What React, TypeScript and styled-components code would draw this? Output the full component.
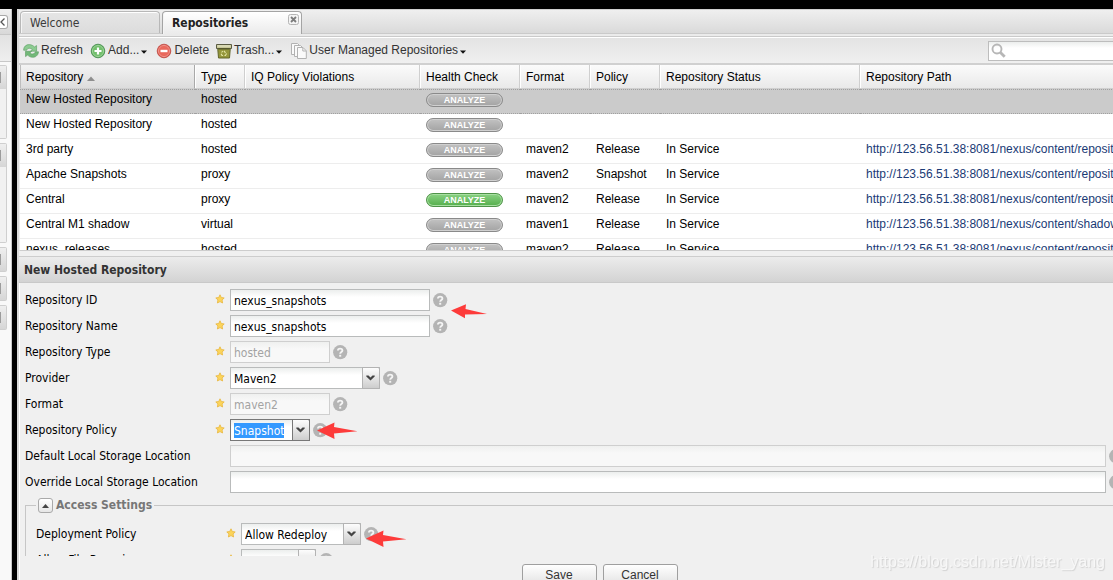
import React from 'react';
import styled, { createGlobalStyle, css } from 'styled-components';

const arial = '"Liberation Sans", Arial, sans-serif';
const tahoma = 'Tahoma, "DejaVu Sans Condensed", "Noto Sans", sans-serif';

const GlobalStyle = createGlobalStyle`
  * { box-sizing: border-box; }
  body { margin: 0; background: #000; color: #000; font: 12px/15px ${arial}; }
  button, input, select { font: inherit; color: inherit; margin: 0; }
`;

const Page = styled.div`
  display: flex;
  gap: 5px;
  height: 100vh;
  padding-top: 9px;
  overflow: hidden;
  background: #000;
`;

/* Left navigation, mostly scrolled out of view */
const Sidebar = styled.aside`
  flex: 0 0 12px;
  background: #f9f9f9;
  border-right: 1px solid #c8c8c8;
  overflow: hidden;
`;
const SidebarHead = styled.div`
  height: 26px;
  padding-top: 6px;
  background: linear-gradient(#f0f0f0, #d8d8d8);
  border-bottom: 1px solid #c8c8c8;
`;
const CollapseButton = styled.button`
  display: flex;
  align-items: center;
  width: 8px;
  height: 14px;
  padding: 0;
  background: #fff;
  border: 1px solid #a8a8a8;
  border-left: 0;
  border-radius: 0 3px 3px 0;
`;
const SidebarBar = styled.div`
  height: 27px;
  margin-bottom: 3px;
  background: linear-gradient(#e2e2e2, #efefef);
  border-bottom: 1px solid #c8c8c8;
`;
const NavGroup = styled.section<{ $body: number }>`
  width: 7px;
  margin-bottom: 4px;
  padding-bottom: ${p => p.$body}px;
  background: #f1f1f1;
  border: 1px solid #cfcfcf;
  border-left: 0;
  border-radius: 0 2px 2px 0;
`;
const NavHead = styled.div`
  display: flex;
  align-items: center;
  height: 23px;
  background: linear-gradient(#efefef, #d6d6d6);
  &::before { content: ''; width: 1px; height: 11px; background: #9c9c9c; }
`;

const Main = styled.main`
  flex: 1;
  min-width: 0;
  display: flex;
  flex-direction: column;
  background: #f0f0f0;
  border-left: 2px solid #d9d9d9;
  overflow: hidden;
`;

const TabStrip = styled.div`
  flex: none;
  height: 28px;
  background: #ebebeb;
  border-bottom: 1px solid #cacaca;
`;
const Tabs = styled.nav`
  display: flex;
  align-items: flex-end;
  gap: 2px;
  height: 25px;
  padding: 2px 0 0 1px;
  background: linear-gradient(#efefef, #dadada);
  border-top: 1px solid #d0d0d0;
  border-bottom: 1px solid #cacaca;
`;
const Tab = styled.button<{ $active?: boolean }>`
  position: relative;
  display: flex;
  align-items: center;
  width: 140px;
  height: 22px;
  padding: 2px 9px 0;
  font-family: ${tahoma};
  color: #3b3b3b;
  background: linear-gradient(#e6e6e6, #dcdcdc);
  border: 1px solid #b8b8b8;
  border-bottom: 0;
  border-radius: 4px 4px 0 0;
  box-shadow: inset 0 1px #fff, inset 1px 0 #f4f4f4;
  ${p => p.$active && css`
    font-weight: bold;
    color: #222;
    height: 23px;
    margin-bottom: -1px;
    padding-top: 1px;
    background: linear-gradient(#fff, #ebebeb);
    border-color: #a4a4a4;
  `}
`;
const TabClose = styled.svg`
  position: absolute;
  top: 2px;
  right: 2px;
`;

const Toolbar = styled.div`
  flex: none;
  display: flex;
  align-items: center;
  height: 28px;
  padding-left: 4px;
  background: linear-gradient(#e3e3e3, #f0f0f0);
  border-top: 1px solid #fff;
  border-bottom: 2px solid #d0d0d0;
`;
const ToolButton = styled.button`
  display: flex;
  align-items: center;
  gap: 2px;
  height: 22px;
  margin-right: 7px;
  padding: 0;
  color: #333;
  white-space: nowrap;
  background: none;
  border: 0;
`;
const CaretSvg = styled.svg`
  margin: 2px 2px 0 0;
`;
const SearchBox = styled.label`
  display: flex;
  align-items: center;
  width: 126px;
  height: 20px;
  margin: 0 -1px 0 auto;
  padding-left: 2px;
  background: linear-gradient(#eceeed, #fff 6px);
  border: 1px solid #bdbdbd;
`;
const SearchInput = styled.input`
  flex: 1;
  min-width: 0;
  background: none;
  border: 0;
  outline: 0;
`;

const GridView = styled.div`
  flex: 0 0 186px;
  background: #fff;
  border-bottom: 1px solid #cdcdcd;
  border-left: 1px solid #efefef;
  overflow: hidden;
`;
const Table = styled.table`
  width: 100%;
  min-width: 1240px;
  table-layout: fixed;
  border-collapse: separate;
  border-spacing: 0;
`;
const Th = styled.th<{ $sorted?: boolean }>`
  height: 24px;
  padding: 2px 0 0 6px;
  font-weight: normal;
  text-align: left;
  white-space: nowrap;
  background: linear-gradient(#fbfbfb, #e9e9e9);
  border-right: 1px solid #cfcfcf;
  border-bottom: 1px solid #cfcfcf;
  box-shadow: inset 1px 0 #fff;
  ${p => p.$sorted && css`
    background: linear-gradient(#f3f3f3, #dcdcdc);
    border-right-color: #a9a9a9;
    box-shadow: inset 1px 0 #bdbdbd;
  `}
`;
const Td = styled.td`
  height: 25px;
  padding: 2px 0 2px 6px;
  vertical-align: top;
  white-space: nowrap;
  border-top: 1px solid #fff;
  border-bottom: 1px solid #ededed;
`;
const Row = styled.tr<{ $selected?: boolean }>`
  ${p => p.$selected && css`
    ${Td} {
      background: #cbcbcb;
      border-top: 1px dotted #a0a0a0;
      border-bottom: 1px dotted #a0a0a0;
    }
  `}
`;
const RepoLink = styled.a`
  color: #1a3a75;
  text-decoration: none;
`;
const Analyze = styled.button<{ $on?: boolean }>`
  display: block;
  width: 77px;
  height: 14px;
  margin-top: 1px;
  padding: 0;
  font: bold 9px/12px ${arial};
  color: #fff;
  background: ${p => (p.$on ? 'linear-gradient(#8ad283, #55ae4c)' : 'linear-gradient(#c2c2c2, #a3a3a3)')};
  border: 1px solid ${p => (p.$on ? '#4f9348' : '#8a8a8a')};
  border-radius: 7px;
  box-shadow: inset 0 0 0 1px ${p => (p.$on ? '#a8dfa2' : '#d0d0d0')};
`;

const DetailHead = styled.h2`
  flex: none;
  height: 27px;
  margin: 5px 0 0;
  padding: 1px 0 0 5px;
  font: bold 12px/25px ${tahoma};
  color: #333;
  background: linear-gradient(#ececec, #d3d3d3);
  border-top: 1px solid #cdcdcd;
  border-bottom: 1px solid #c9c9c9;
`;
const FormBody = styled.form`
  flex: 1;
  min-height: 0;
  padding: 6px 0 0 5px;
  font-family: ${tahoma};
  border-left: 1px solid #fff;
  overflow: hidden;
`;
const FormRow = styled.div<{ $wide?: boolean }>`
  display: grid;
  grid-template-columns: 190px 15px 1fr;
  align-items: center;
  height: 22px;
  margin-bottom: 4px;
  margin-right: ${p => (p.$wide ? '-11px' : '0')};
`;
const Control = styled.div`
  display: flex;
  align-items: center;
  gap: 3px;
`;
const TextInput = styled.input<{ $width?: number }>`
  ${p => (p.$width ? css`width: ${p.$width}px;` : css`flex: 1;`)}
  min-width: 0;
  height: 22px;
  padding: 2px 3px 0;
  background: linear-gradient(#eceeed, #fff 7px);
  border: 1px solid #b9bbbb;
  border-radius: 0;
  outline: 0;
  &:disabled {
    color: #a3a3a3;
    background: linear-gradient(#eff0ef, #f8f8f8 7px);
    border-color: #cfcfcf;
  }
`;
const Combo = styled.span<{ $width: number }>`
  position: relative;
  display: flex;
  width: ${p => p.$width}px;
`;
const Select = styled.select<{ $highlight?: boolean }>`
  appearance: none;
  width: 100%;
  height: 22px;
  padding: 2px 18px 0 3px;
  background: linear-gradient(#eceeed, #fff 7px);
  border: 1px solid #b9bbbb;
  border-radius: 0;
  outline: 0;
  ${p => p.$highlight && css`
    color: #fff;
    background: linear-gradient(#3399ff, #3399ff) 3px 3px / 50px 15px no-repeat, linear-gradient(#eceeed, #fff 7px);
    border-color: #777;
  `}
`;
const Trigger = styled.span<{ $dark?: boolean }>`
  position: absolute;
  top: 0;
  right: 0;
  display: flex;
  align-items: center;
  justify-content: center;
  width: 18px;
  height: 22px;
  padding-right: 1px;
  background: linear-gradient(#fdfdfd, #cdcdcd);
  border: 1px solid ${p => (p.$dark ? '#777' : '#b3b3b3')};
  border-radius: 0 2px 0 0;
  pointer-events: none;
`;
const HelpWrap = styled.span`
  position: relative;
  display: flex;
  flex: none;
`;
const ArrowSvg = styled.svg<{ $left: number; $top: number }>`
  position: absolute;
  left: ${p => p.$left}px;
  top: ${p => p.$top}px;
`;

const Fieldset = styled.fieldset`
  min-width: 0;
  height: 120px;
  margin: 5px -10px 0 0;
  padding: 10px;
  border: 1px solid #c6c6c6;
`;
const Legend = styled.legend`
  display: flex;
  align-items: center;
  gap: 3px;
  height: 15px;
  padding: 0 2px;
  font-weight: bold;
  color: #777;
`;
const Toggle = styled.button`
  display: flex;
  align-items: center;
  justify-content: center;
  width: 15px;
  height: 15px;
  padding: 0;
  background: linear-gradient(#fff, #e6e6e6);
  border: 1px solid #a9a9a9;
  border-radius: 3px;
`;

const Footer = styled.footer`
  flex: 0 0 24px;
  min-height: 0;
  display: flex;
  justify-content: center;
  align-items: flex-start;
  gap: 6px;
  padding: 8px 0 0 66px;
  border-left: 1px solid #fff;
  overflow: hidden;
`;
const FormButton = styled.button`
  flex: none;
  width: 75px;
  height: 22px;
  padding: 0;
  color: #333;
  background: linear-gradient(#fff, #e2e2e2);
  border: 1px solid #9f9f9f;
  border-radius: 3px;
`;
const Watermark = styled.div`
  position: fixed;
  right: 8px;
  bottom: 8px;
  font-size: 16px;
  line-height: 20px;
  color: #f7f7f7;
  text-shadow: 1px 1px 1px #d2d2d2;
  pointer-events: none;
`;

const Caret = () => (
  <CaretSvg width="6" height="4" viewBox="0 0 6 4"><path d="M0 0.5h6L3 3.8z" fill="#111" /></CaretSvg>
);
const RefreshIcon = () => (
  <svg width="16" height="16" viewBox="0 0 16 16" stroke="#5a9a62" strokeWidth=".6" strokeLinejoin="round">
    <path d="M.6 7.200C.6 3.500 3.200 1.500 6.300 1.600 8.600 1.700 10.300 2.700 11.400 3.900L13.600 2.600V8.200H7.600L9.200 6.500C7.200 4.600 4.400 4.900 3.600 7.300z" fill="#8ccb91" />
    <path d="M15.500 8.800C15.200 12.600 12.200 14.500 9.500 14.300 7.400 14.200 5.800 13.300 4.700 12.100L2.500 13.600V8.300H8.500L6.900 10C8.900 11.800 11.600 11 12.400 8.800z" fill="#72b878" />
  </svg>
);
const RoundIcon = ({ minus }: { minus?: boolean }) => (
  <svg width="16" height="16" viewBox="0 0 16 16">
    <circle cx="8" cy="8" r="6.800" fill={minus ? '#d84c42' : '#58ab58'} stroke={minus ? '#bd4a42' : '#42894a'} strokeWidth=".8" />
    <circle cx="8" cy="8" r="5.600" fill={minus ? '#e9685c' : '#72bf6c'} stroke={minus ? '#f3aaa3' : '#b3e0ad'} strokeWidth=".7" />
    <path d={minus ? 'M4.500 6.800h7v2.400h-7z' : 'M6.900 4.500h2.200v2.400h2.400v2.200H9.100v2.400H6.900V9.100H4.500V6.900h2.400z'} fill="#fff" />
  </svg>
);
const TrashIcon = () => (
  <svg width="16" height="16" viewBox="0 0 16 16">
    <path d="M1.700 5h12.600l-.8 10H2.500z" fill="#94963b" stroke="#62662a" />
    <path d="M.5 1.500h15v4H.5z" fill="#c8c798" stroke="#5b5c43" />
    <path d="M1.500 2.500h13v1h-13z" fill="#e9e8cf" />
    <path d="M2.500 5h11v1.500h-11z" fill="#55582c" />
    <path d="M8 7.800l1.500 2M10.600 10.500l-1.200 2H8.500M7 12.500H6l-.9-1.800M5.600 9.500L6.800 8" fill="none" stroke="#e4e6a5" strokeWidth="1.100" />
  </svg>
);
const PagesIcon = () => (
  <svg width="16" height="16" viewBox="0 0 16 16" fill="#fafafa" stroke="#b2b2b2">
    <path d="M.5.500h6l3 3v8h-9z" /><path d="M3.500 2.500h6l3 3v8h-9z" />
    <path d="M6.500 4.500h5.500l3.300 3.300v7.700H6.500z" /><path d="M11.800 4.700v3.300h3.300" fill="none" />
  </svg>
);
const SearchIcon = () => (
  <svg width="16" height="16" viewBox="0 0 16 16" fill="none" stroke="#b7b7b7">
    <circle cx="6" cy="6" r="4.500" strokeWidth="1.900" /><path d="M9.200 9.200l4.500 4.500" strokeWidth="2.800" />
  </svg>
);
const Star = () => (
  <svg width="10" height="10" viewBox="0 0 10 10">
    <path d="M5 .8l1.300 2.700 2.900.4-2.100 2.100.5 3L5 7.600 2.400 9l.5-3L.8 3.900l2.900-.4z" fill="#fbd45b" stroke="#e8b63e" strokeWidth=".8" strokeLinejoin="round" />
  </svg>
);
const HelpIcon = () => (
  <svg width="15" height="15" viewBox="0 0 15 15">
    <circle cx="7.200" cy="7.200" r="7.100" fill="#b4b4b4" />
    <path d="M4.900 5.600C4.900 3 9.400 3 9.400 5.500 9.400 7 7.200 7 7.200 8.800" fill="none" stroke="#f4f4f4" strokeWidth="1.900" />
    <path d="M6.200 9.800h2v1.900h-2z" fill="#f4f4f4" />
  </svg>
);

type ArrowPos = { left: number; top: number; flat?: boolean };
type FieldProps = {
  id: string;
  label: string;
  value?: string;
  width?: number;
  required?: boolean;
  disabled?: boolean;
  combo?: boolean;
  focused?: boolean;
  arrow?: ArrowPos;
};

const Pointer = ({ left, top, flat }: ArrowPos) => (
  <ArrowSvg $left={left} $top={top} width="42" height="18" viewBox="0 0 42 18">
    <path
      d={flat ? 'M0 6.500L15 .3 14.500 5 36 10 14 10.500V14.200z' : 'M0 8.500L17.500.500 17 5 40.500 9.300 17 11.500 17.500 17z'}
      fill="#fd3b3a"
    />
  </ArrowSvg>
);

const Field = ({ id, label, value = '', width, required, disabled, combo, focused, arrow }: FieldProps) => (
  <FormRow $wide={!width}>
    <label htmlFor={id}>{label}</label>
    <span>{required && <Star />}</span>
    <Control>
      {combo ? (
        <Combo $width={width ?? 100}>
          <Select id={id} $highlight={focused} defaultValue={value}><option>{value}</option></Select>
          <Trigger $dark={focused}>
            <svg width="9" height="7" viewBox="0 0 9 7"><path d="M.3.500h2.200l2 2 2-2h2.200v.9L4.500 5.500.3 1.400z" fill="#444" /></svg>
          </Trigger>
        </Combo>
      ) : (
        <TextInput id={id} $width={width} defaultValue={value} disabled={disabled} />
      )}
      <HelpWrap><HelpIcon />{arrow && <Pointer {...arrow} />}</HelpWrap>
    </Control>
  </FormRow>
);

const columns: [string, number?][] = [
  ['Repository', 175], ['Type', 50], ['IQ Policy Violations', 175], ['Health Check', 100],
  ['Format', 70], ['Policy', 70], ['Repository Status', 200], ['Repository Path'],
];

const base = 'http://123.56.51.38:8081/nexus/content/';
const repositories = [
  { name: 'New Hosted Repository', type: 'hosted' },
  { name: 'New Hosted Repository', type: 'hosted' },
  { name: '3rd party', type: 'hosted', format: 'maven2', policy: 'Release', path: 'repositories/thirdparty' },
  { name: 'Apache Snapshots', type: 'proxy', format: 'maven2', policy: 'Snapshot', path: 'repositories/apache-snapshots' },
  { name: 'Central', type: 'proxy', format: 'maven2', policy: 'Release', path: 'repositories/central', on: true },
  { name: 'Central M1 shadow', type: 'virtual', format: 'maven1', policy: 'Release', path: 'shadows/central-m1' },
  { name: 'nexus_releases', type: 'hosted', format: 'maven2', policy: 'Release', path: 'repositories/nexus_releases' },
];

export default function App() {
  return (
    <Page>
      <GlobalStyle />
      <Sidebar>
        <SidebarHead>
          <CollapseButton aria-label="Collapse navigation">
            <svg width="6" height="8" viewBox="0 0 6 8"><path d="M4.500.500L1 4l3.500 3.500" fill="none" stroke="#555" strokeWidth="1.300" /></svg>
          </CollapseButton>
        </SidebarHead>
        <SidebarBar />
        {[49, 75, 0, 0, 0].map((body, i) => (
          <NavGroup key={i} $body={body}><NavHead /></NavGroup>
        ))}
      </Sidebar>
      <Main>
        <TabStrip>
          <Tabs>
            <Tab>Welcome</Tab>
            <Tab $active>
              Repositories
              <TabClose width="11" height="11" viewBox="0 0 11 11">
                <rect x=".5" y=".5" width="10" height="10" rx="2" fill="#f4f4f4" stroke="#b5b5b5" />
                <path d="M3 3l5 5M8 3L3 8" stroke="#7c7c7c" strokeWidth="1.800" />
              </TabClose>
            </Tab>
          </Tabs>
        </TabStrip>
        <Toolbar>
          <ToolButton><RefreshIcon />Refresh</ToolButton>
          <ToolButton><RoundIcon />Add...<Caret /></ToolButton>
          <ToolButton><RoundIcon minus />Delete</ToolButton>
          <ToolButton><TrashIcon />Trash...<Caret /></ToolButton>
          <ToolButton><PagesIcon />User Managed Repositories<Caret /></ToolButton>
          <SearchBox><SearchIcon /><SearchInput aria-label="Search repositories" /></SearchBox>
        </Toolbar>
        <GridView>
          <Table>
            <colgroup>{columns.map(([name, width]) => <col key={name} width={width} />)}</colgroup>
            <thead>
              <tr>
                {columns.map(([name], i) => (
                  <Th key={name} $sorted={i === 0}>
                    {name}
                    {i === 0 && <> <svg width="8" height="5" viewBox="0 0 8 5"><path d="M0 5l4-4.500L8 5z" fill="#8e8e8e" /></svg></>}
                  </Th>
                ))}
              </tr>
            </thead>
            <tbody>
              {repositories.map((r, i) => (
                <Row key={i} $selected={i === 0}>
                  <Td>{r.name}</Td>
                  <Td>{r.type}</Td>
                  <Td />
                  <Td><Analyze $on={r.on}>ANALYZE</Analyze></Td>
                  <Td>{r.format}</Td>
                  <Td>{r.policy}</Td>
                  <Td>{r.path && 'In Service'}</Td>
                  <Td>{r.path && <RepoLink href={base + r.path}>{base + r.path}</RepoLink>}</Td>
                </Row>
              ))}
            </tbody>
          </Table>
        </GridView>
        <DetailHead>New Hosted Repository</DetailHead>
        <FormBody>
          <Field id="repo-id" label="Repository ID" value="nexus_snapshots" width={200} required arrow={{ left: 18, top: 11, flat: true }} />
          <Field id="repo-name" label="Repository Name" value="nexus_snapshots" width={200} required />
          <Field id="repo-type" label="Repository Type" value="hosted" width={100} required disabled />
          <Field id="provider" label="Provider" value="Maven2" width={150} required combo />
          <Field id="format" label="Format" value="maven2" width={100} required disabled />
          <Field id="policy" label="Repository Policy" value="Snapshot" width={80} required combo focused arrow={{ left: 4, top: -1 }} />
          <Field id="default-storage" label="Default Local Storage Location" disabled />
          <Field id="override-storage" label="Override Local Storage Location" />
          <Fieldset>
            <Legend>
              <Toggle type="button" aria-label="Collapse access settings">
                <svg width="7" height="4" viewBox="0 0 7 4"><path d="M0 4L3.500 0 7 4z" fill="#444" /></svg>
              </Toggle>
              Access Settings
            </Legend>
            <Field id="deployment" label="Deployment Policy" value="Allow Redeploy" width={120} required combo arrow={{ left: 2, top: 3 }} />
            <Field id="file-browsing" label="Allow File Browsing" value="True" width={75} required combo />
          </Fieldset>
        </FormBody>
        <Footer>
          <FormButton>Save</FormButton>
          <FormButton>Cancel</FormButton>
        </Footer>
      </Main>
      <Watermark>https://blog.csdn.net/Mister_yang</Watermark>
    </Page>
  );
}
